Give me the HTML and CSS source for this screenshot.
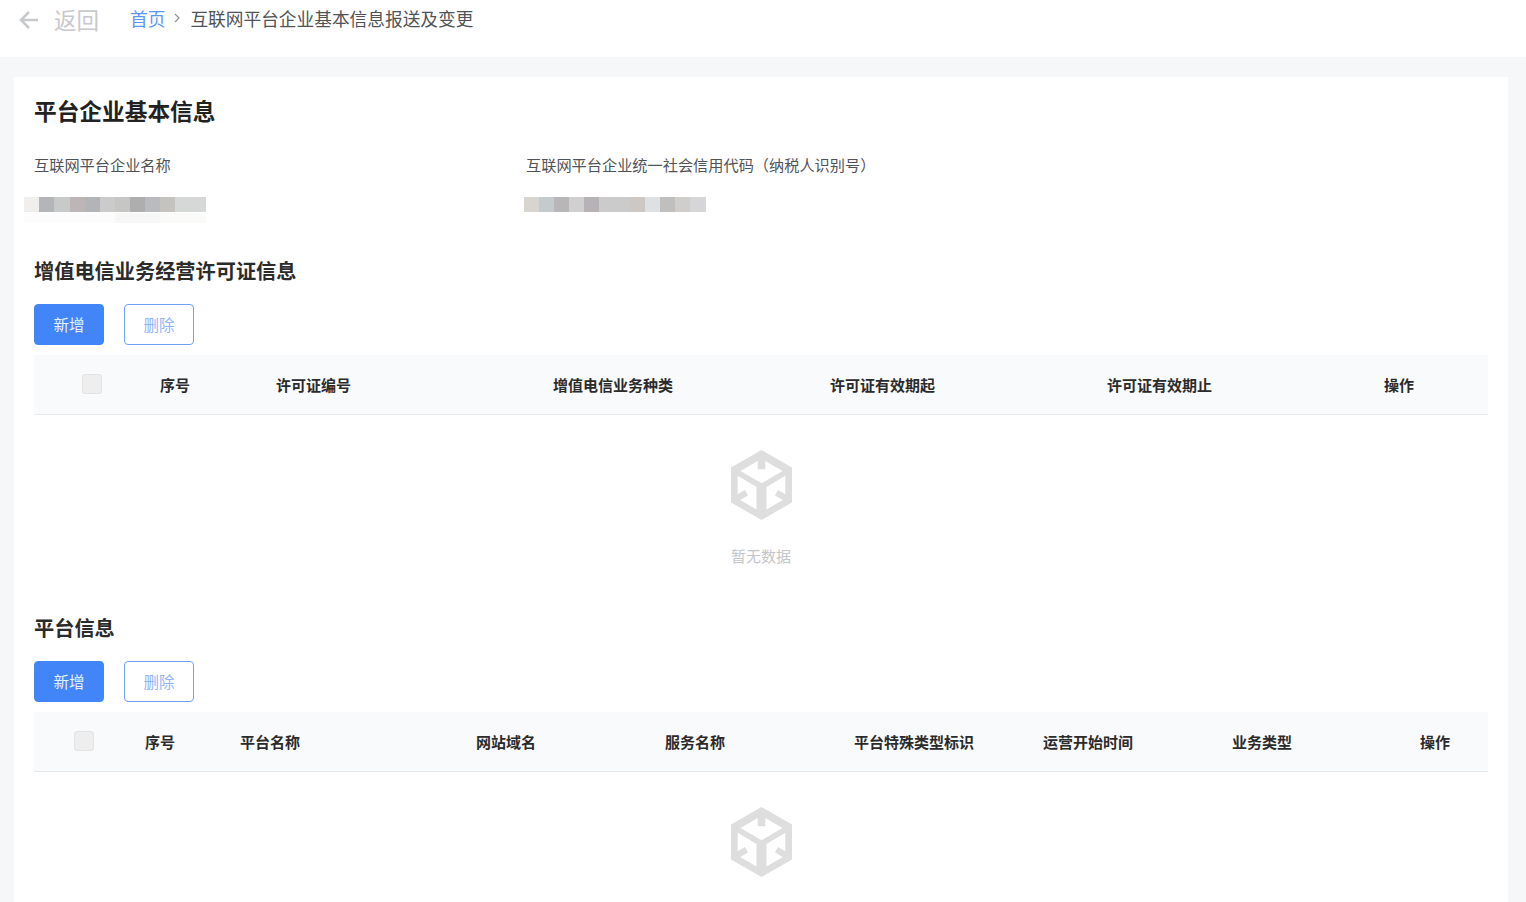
FILE: index.html
```html
<!DOCTYPE html>
<html lang="zh-CN">
<head>
  <meta charset="UTF-8">
  <title>互联网平台企业基本信息报送及变更</title>
  <link rel="stylesheet" href="styles.css">
</head>
<body>
  <!-- 顶部导航 -->
  <div class="topbar">
    <a class="back" href="#">
      <svg class="back-icon" viewBox="0 0 22 22"><path d="M20 11H3M11 3l-8 8 8 8"/></svg>
      <span>返回</span>
    </a>
    <a class="crumb-link" href="#">首页</a>
    <svg class="crumb-sep" viewBox="0 0 8 10"><path d="M2 1l4 4-4 4"/></svg>
    <span class="crumb-now">互联网平台企业基本信息报送及变更</span>
  </div>

  <div class="card">
    <h1 class="page-title">平台企业基本信息</h1>
    <div class="info">
      <div class="info-item name">
        <div class="info-label">互联网平台企业名称</div>
        <div class="mosaic mosaic-a"></div>
      </div>
      <div class="info-item">
        <div class="info-label">互联网平台企业统一社会信用代码（纳税人识别号）</div>
        <div class="mosaic mosaic-b"></div>
      </div>
    </div>

    <!-- 许可证 -->
    <h2 class="section-title">增值电信业务经营许可证信息</h2>
    <div class="actions">
      <button class="btn btn-primary">新增</button>
      <button class="btn btn-plain">删除</button>
    </div>
    <div class="thead thead-license">
      <div class="cell-check"><span class="checkbox"></span></div>
      <div>序号</div>
      <div>许可证编号</div>
      <div>增值电信业务种类</div>
      <div>许可证有效期起</div>
      <div>许可证有效期止</div>
      <div>操作</div>
    </div>
    <div class="empty">
      <svg class="empty-icon" viewBox="0 0 61 70"><path fill-rule="evenodd" d="M30.500 0L61 17.500v35L30.500 70 0 52.500v-35zM9.500 21l17.200-10v8.300h7.600V11l17.200 10-21 12.300zM6.700 25.700L25.500 37v22.500L9.200 50.100l7.800-4.600-3-5.500-7.300 4.200zM54.300 25.700L35.500 37v22.500l16.300-9.400-7.800-4.600 3-5.500 7.300 4.200z"/></svg>
      <div class="empty-text">暂无数据</div>
    </div>

    <!-- 平台 -->
    <h2 class="section-title">平台信息</h2>
    <div class="actions">
      <button class="btn btn-primary">新增</button>
      <button class="btn btn-plain">删除</button>
    </div>
    <div class="thead thead-platform">
      <div class="cell-check"><span class="checkbox"></span></div>
      <div>序号</div>
      <div>平台名称</div>
      <div>网站域名</div>
      <div>服务名称</div>
      <div>平台特殊类型标识</div>
      <div>运营开始时间</div>
      <div>业务类型</div>
      <div>操作</div>
    </div>
    <div class="empty">
      <svg class="empty-icon" viewBox="0 0 61 70"><path fill-rule="evenodd" d="M30.500 0L61 17.500v35L30.500 70 0 52.500v-35zM9.500 21l17.200-10v8.300h7.600V11l17.200 10-21 12.300zM6.700 25.700L25.500 37v22.500L9.200 50.100l7.800-4.600-3-5.500-7.300 4.200zM54.300 25.700L35.500 37v22.500l16.300-9.400-7.800-4.600 3-5.500 7.300 4.200z"/></svg>
      <div class="empty-text">暂无数据</div>
    </div>
  </div>
</body>
</html>
```

FILE: styles.css
```css
html, body {
  height: 100%;
}

body {
  margin: 0;
  background: #f6f7f9;
  color: #303133;
  font-family: "Noto Sans CJK SC", "Noto Sans", sans-serif;
  overflow: hidden;
}

/* 顶部导航 */
.topbar {
  height: 57px;
  padding: 0 0 21px 18px;
  box-sizing: border-box;
  background: #fff;
  display: flex;
  align-items: center;
}

.back {
  display: flex;
  align-items: center;
  color: #c8c9cc;
  font-size: 22.500px;
  text-decoration: none;
  margin: 2px 31px 0 0;
}

.back-icon {
  width: 22px;
  height: 22px;
  margin: 2px 14px 0 0;
  fill: none;
  stroke: #c8c9cc;
  stroke-width: 2.500;
}

.crumb-link {
  color: #5b96f7;
  font-size: 17.700px;
  text-decoration: none;
}

.crumb-sep {
  width: 8px;
  height: 10px;
  margin: 0 9px 0 8px;
  fill: none;
  stroke: #909399;
  stroke-width: 1.200;
}

.crumb-now {
  color: #505356;
  font-size: 17.700px;
}

/* 内容卡片 */
.card {
  background: #fff;
  margin: 20px 18px 0 14px;
  padding: 19px 20px 0;
}

.page-title {
  margin: 0;
  font-size: 22.700px;
  line-height: 30px;
  font-weight: 700;
  color: #222;
}

.info {
  display: flex;
  margin-top: 28px;
}

.info-item.name {
  width: 492px;
}

.info-label {
  font-size: 15.200px;
  line-height: 20px;
  color: #505356;
}

.mosaic {
  width: 182px;
  height: 15px;
  margin: 23px 0 0 -10px;
}

.mosaic-a {
  height: 26px;
  background:
    linear-gradient(to right, #f0efed 0 15px, #b4b5b8 15px 30px, #c8cac9 30px 46px, #bcb7b6 46px 61px, #b2b4b8 61px 76px, #cbcbcb 76px 91px, #c6c6c4 91px 106px, #aeaeae 106px 121px, #babbbe 121px 136px, #c4c3c0 136px 151px, #d6d8d8 151px 182px) top / 100% 15px no-repeat,
    linear-gradient(#fff, #fff) 0 15px / 100% 1px no-repeat,
    linear-gradient(to right, #fcfcfc 0 91px, #f7f7f7 91px 136px, #fafaf9 136px 182px) 0 16px / 100% 10px no-repeat;
  margin-bottom: -11px;
}

.mosaic-b {
  margin-left: -2px;
  background: linear-gradient(to right, #d8d5d1 0 15px, #c5cacd 15px 30px, #b8b6b7 30px 45px, #d0d0d0 45px 60px, #b6b2b5 60px 75px, #cbcbcb 75px 106px, #cdc8c3 106px 121px, #dde1e4 121px 136px, #c0bfbd 136px 151px, #cfcecb 151px 166px, #d6d6d8 166px 182px);
}

.section-title {
  margin: 45px 0 0;
  font-size: 20.200px;
  line-height: 27px;
  font-weight: 700;
  color: #2b2b2b;
}

.actions {
  display: flex;
  gap: 20px;
  margin-top: 20px;
}

.btn {
  width: 70px;
  height: 41px;
  padding: 0 0 2px;
  border-radius: 4px;
  font-family: inherit;
  font-size: 15.500px;
}

.btn-primary {
  background: #4285f9;
  border: 1px solid #4285f9;
  color: #e8f0ff;
}

.btn-plain {
  background: #fff;
  border: 1px solid #6fa0f7;
  color: #8fb4f8;
}

/* 表头 */
.thead {
  display: grid;
  align-items: center;
  height: 60px;
  margin-top: 10px;
  background: #f9fafc;
  border-bottom: 1px solid #e6e8eb;
  box-sizing: border-box;
  font-size: 15px;
  font-weight: 700;
  color: #2b2b2b;
}

.thead-license {
  grid-template-columns: 126px 116px 277px 277px 277px 277px 104px;
}

.thead-platform {
  grid-template-columns: 111px 95px 236px 189px 189px 189px 189px 188px 68px;
}

.thead-license .cell-check {
  padding-left: 48px;
}

.thead-platform .cell-check {
  padding-left: 40px;
}

.cell-check {
  display: flex;
  margin-top: -2px;
}

.checkbox {
  width: 18px;
  height: 18px;
  background: #eeeeef;
  border: 1px solid #e2e3e5;
  border-radius: 3px;
}

/* 空状态 */
.empty {
  display: flex;
  flex-direction: column;
  align-items: center;
  padding: 35px 0 3px;
}

.empty-icon {
  width: 61px;
  height: 70px;
  fill: #dedede;
}

.empty-text {
  margin-top: 26px;
  font-size: 15px;
  line-height: 20px;
  color: #c4c5c7;
}
```
